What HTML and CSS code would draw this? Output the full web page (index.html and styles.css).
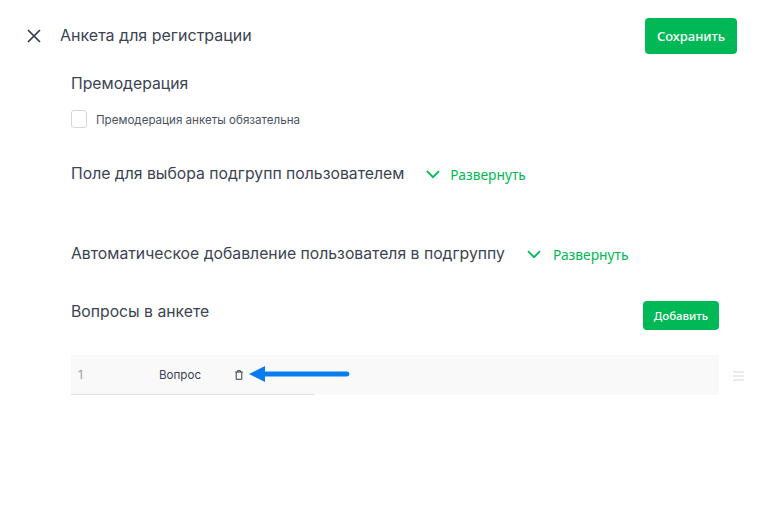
FILE: index.html
```html
<!DOCTYPE html>
<html lang="ru">
<head>
<meta charset="utf-8">
<title>Анкета для регистрации</title>
<link rel="stylesheet" href="styles.css">
</head>
<body>
<div class="page">
  <header class="topbar">
    <svg class="close" width="14" height="14" viewBox="0 0 14 14"><path d="M1 1L13 13M13 1L1 13" stroke="#333d4b" stroke-width="1.7" fill="none"/></svg>
    <h1 class="title">Анкета для регистрации</h1>
    <button class="btn btn-save">Сохранить</button>
  </header>
  <main class="content">
    <h2 class="heading premod">Премодерация</h2>
    <label class="check"><span class="box"></span><span class="check-text">Премодерация анкеты обязательна</span></label>
    <div class="row row-groups">
      <h2 class="heading">Поле для выбора подгрупп пользователем</h2>
      <span class="expand"><svg width="14" height="9" viewBox="0 0 14 9"><path d="M1 1.2L7 7.2L13 1.2" stroke="#00b956" stroke-width="1.8" fill="none"/></svg>Развернуть</span>
    </div>
    <div class="row row-auto">
      <h2 class="heading">Автоматическое добавление пользователя в подгруппу</h2>
      <span class="expand"><svg width="14" height="9" viewBox="0 0 14 9"><path d="M1 1.2L7 7.2L13 1.2" stroke="#00b956" stroke-width="1.8" fill="none"/></svg>Развернуть</span>
    </div>
    <div class="row-questions">
      <h2 class="heading">Вопросы в анкете</h2>
      <button class="btn btn-add">Добавить</button>
    </div>
    <div class="table-wrap">
      <div class="table-row">
        <div class="cells">
          <span class="num">1</span>
          <span class="question">Вопрос</span>
          <svg class="trash" width="8" height="10" viewBox="0 0 8 10"><path d="M0.3 2H7.7M2.6 2V0.7H5.4V2M1.2 2V9.3H6.8V2" stroke="#333d4b" stroke-width="1" fill="none"/></svg>
        </div>
      </div>
      <svg class="drag" width="11" height="10" viewBox="0 0 11 10"><path d="M0 1H11M0 5H11M0 9H11" stroke="#d5d8e0" stroke-width="1.2"/></svg>
      <svg class="arrow" width="102" height="18" viewBox="0 0 102 18"><path d="M0 9L16 1V6.5H98a2.5 2.5 0 0 1 0 5H16V17Z" fill="#0a7cf0"/></svg>
    </div>
  </main>
</div>
</body>
</html>
```
FILE: styles.css
```css
* { box-sizing: border-box; }
html, body { margin: 0; padding: 0; background: #fff; }
body { font-family: Inter, "Noto Sans", sans-serif; color: #3b4452; }
.page { width: 763px; height: 528px; overflow: hidden; padding: 18px 26px 0 27px; }
.topbar { display: flex; align-items: center; height: 36px; }
.close { flex: none; }
.title { margin: 0 0 0 19px; font-size: 16px; font-weight: 400; flex: 1; color: #3b4452; position: relative; top: -1px; }
.btn { border: 0; border-radius: 4px; background: #00b956; color: #fff; font-family: "Noto Sans", sans-serif; font-weight: 500; }
.btn-save { width: 92px; height: 36px; font-size: 13px; padding: 0; }
.content { padding-left: 44px; }
.heading { margin: 0; font-size: 15.75px; font-weight: 400; line-height: 20px; color: #3b4452; white-space: nowrap; }
.premod { margin-top: 20px; }
.check { display: flex; align-items: center; margin-top: 16px; height: 18px; }
.box { width: 16px; height: 18px; border: 1px solid #d3d7e0; border-radius: 3px; }
.check-text { margin-left: 9px; font-size: 11.6px; color: #4a5361; position: relative; top: 1px; }
.row { display: flex; align-items: center; }
.row-groups { margin-top: 36px; }
.row-auto { margin-top: 60px; }
.expand { display: flex; align-items: center; margin-left: 22px; font-family: "Noto Sans", sans-serif; font-size: 13.8px; color: #00b956; }
.expand svg { margin-right: 10px; }
.row-auto .expand svg { margin-right: 12px; }
.row-questions { display: flex; justify-content: space-between; align-items: flex-start; margin-top: 37px; margin-right: 18px; height: 29px; }
.row-questions .heading { margin-top: 1px; }
.btn-add { width: 76px; height: 29px; font-size: 11.4px; padding: 0; }
.table-wrap { position: relative; margin-top: 25px; }
.table-row { width: 648px; height: 40px; background: #f9f9fa; }
.cells { display: flex; align-items: center; width: 243px; height: 40px; border-bottom: 1px solid #dfe1e8; padding-left: 7px; }
.num { width: 81px; font-size: 12px; color: #9aa0ab; }
.question { width: 75px; font-size: 11.6px; color: #3b4452; }
.trash { flex: none; margin-left: 1px; }
.drag { position: absolute; left: 662px; top: 16px; }
.arrow { position: absolute; left: 178px; top: 10px; }
```
